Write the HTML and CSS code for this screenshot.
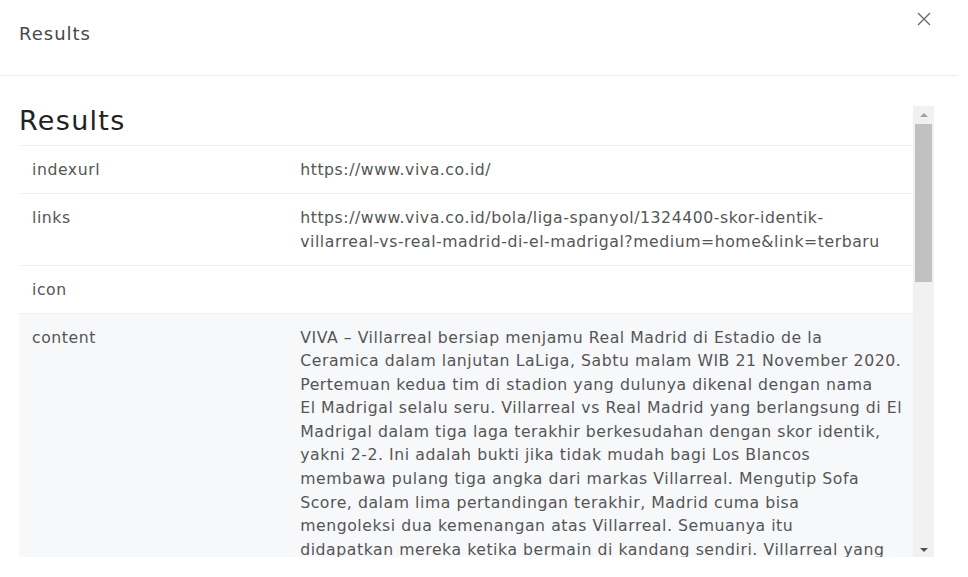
FILE: index.html
```html
<!DOCTYPE html>
<html lang="id">
<head>
<meta charset="utf-8">
<title>Results</title>
<link rel="stylesheet" href="styles.css">
</head>
<body>
<div class="modal">
  <div class="modal-header">
    <div class="modal-title">Results</div>
    <button class="close" aria-label="Close">
      <svg width="14" height="14" viewBox="0 0 14 14"><path d="M1 1L13 13M13 1L1 13" stroke="#6b6b6b" stroke-width="1.4" fill="none"/></svg>
    </button>
  </div>
  <div class="modal-body">
    <div class="scroll-area">
      <h3 class="section-title">Results</h3>
      <table class="results">
        <tr><td class="key">indexurl</td><td class="val">https://www.viva.co.id/</td></tr>
        <tr><td class="key">links</td><td class="val">https://www.viva.co.id/bola/liga-spanyol/1324400-skor-identik-villarreal-vs-real-madrid-di-el-madrigal?medium=home&amp;link=terbaru</td></tr>
        <tr><td class="key">icon</td><td class="val"></td></tr>
        <tr class="shaded"><td class="key">content</td><td class="val lines">VIVA – Villarreal bersiap menjamu Real Madrid di Estadio de la<br>Ceramica dalam lanjutan LaLiga, Sabtu malam WIB 21 November 2020.<br>Pertemuan kedua tim di stadion yang dulunya dikenal dengan nama<br>El Madrigal selalu seru. Villarreal vs Real Madrid yang berlangsung di El<br>Madrigal dalam tiga laga terakhir berkesudahan dengan skor identik,<br>yakni 2-2. Ini adalah bukti jika tidak mudah bagi Los Blancos<br>membawa pulang tiga angka dari markas Villarreal. Mengutip Sofa<br>Score, dalam lima pertandingan terakhir, Madrid cuma bisa<br>mengoleksi dua kemenangan atas Villarreal. Semuanya itu<br>didapatkan mereka ketika bermain di kandang sendiri. Villarreal yang<br>kini dilatih Unai Emery tampil cukup menjanjikan di awal musim ini<br>dan berada di papan atas klasemen sementara LaLiga.</td></tr>
      </table>
    </div>
    <div class="scrollbar">
      <div class="sb-btn sb-up"><span class="tri-up"></span></div>
      <div class="sb-thumb"></div>
      <div class="sb-track"></div>
      <div class="sb-btn sb-down"><span class="tri-down"></span></div>
    </div>
  </div>
</div>
</body>
</html>
```

FILE: styles.css
```css
* { box-sizing: border-box; }
html, body { margin: 0; padding: 0; background: #fff; }
body {
  font-family: "DejaVu Sans", sans-serif;
  font-weight: 400;
  color: #555;
  width: 968px;
  height: 577px;
  overflow: hidden;
}
.modal { width: 958px; }
.modal-header {
  height: 76px;
  border-bottom: 1px solid #efefef;
  display: flex;
  justify-content: space-between;
  align-items: flex-start;
  padding: 0 27px 0 19px;
}
.modal-title {
  font-size: 18px;
  letter-spacing: 1px;
  line-height: 28px;
  padding-top: 20px;
  color: #484848;
}
.close {
  border: 0;
  background: none;
  padding: 0;
  margin-top: 12px;
  width: 14px;
  height: 14px;
  display: block;
}
.close svg { display: block; }
.modal-body {
  display: flex;
  padding: 30px 24px 0 19px;
  height: 481px;
}
.scroll-area {
  flex: 1;
  overflow: hidden;
  height: 451px;
}
.section-title {
  margin: 0 0 9px;
  font-size: 27px;
  letter-spacing: 1.3px;
  line-height: 30px;
  font-weight: 400;
  color: #222;
}
.results {
  width: 100%;
  table-layout: fixed;
  border-collapse: collapse;
  font-size: 15.7px;
  letter-spacing: 0.55px;
  line-height: 23.55px;
}
.results td {
  border-top: 1px solid #f0f0f0;
  padding: 12px 12px 11.5px 13px;
  vertical-align: top;
}
.results .key { width: 30%; }
.results .lines { white-space: nowrap; }
.results tr.shaded td { background: #f7f8fa; }
.scrollbar {
  width: 21px;
  height: 451px;
  background: #f1f1f1;
  display: flex;
  flex-direction: column;
}
.sb-btn {
  height: 18px;
  display: flex;
  align-items: center;
  justify-content: center;
  flex: none;
}
.sb-thumb {
  height: 158px;
  margin: 0 2px;
  background: #c1c1c1;
  flex: none;
}
.sb-track { flex: 1; }
.tri-up {
  width: 0; height: 0;
  border-left: 4px solid transparent;
  border-right: 4px solid transparent;
  border-bottom: 4px solid #a3a3a3;
}
.tri-down {
  width: 0; height: 0;
  border-left: 4px solid transparent;
  border-right: 4px solid transparent;
  border-top: 4px solid #505050;
  margin-top: 4px;
}
```
